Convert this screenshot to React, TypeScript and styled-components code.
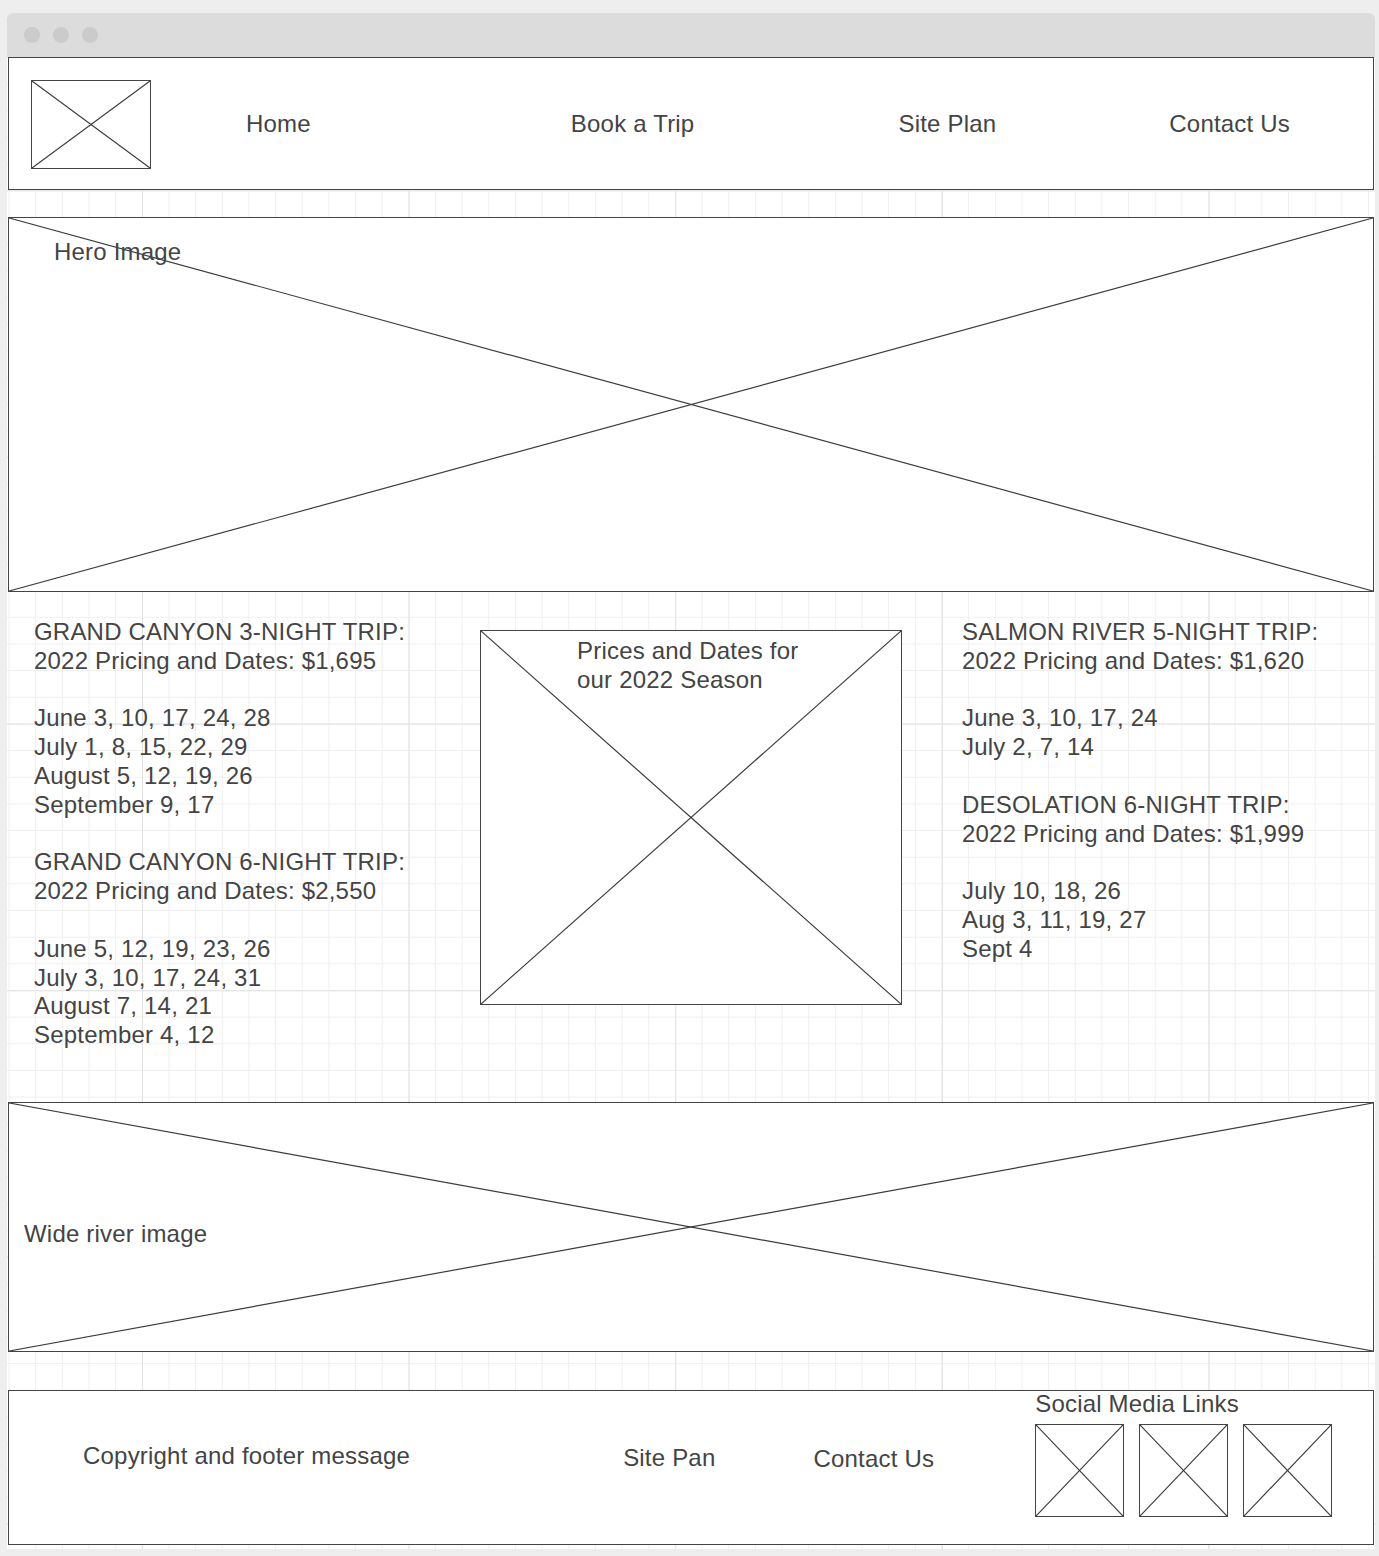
import React from 'react';
import styled, { createGlobalStyle } from 'styled-components';

const GlobalStyle = createGlobalStyle`
  html, body {
    margin: 0;
    padding: 0;
    background: #eeeeee;
  }
  body {
    font-family: 'Liberation Sans', Arial, sans-serif;
    color: #444;
  }
  * {
    box-sizing: border-box;
  }
`;

const ink = '#444';

const Window = styled.div`
  width: 1368px;
  margin: 13px 0 0 7px;
  padding-bottom: 8px;
`;

const TitleBar = styled.div`
  height: 44px;
  background: #dcdcdc;
  border-radius: 6px 6px 0 0;
  display: flex;
  align-items: center;
  gap: 13px;
  padding-left: 17px;
`;

const Dot = styled.span`
  width: 16px;
  height: 16px;
  border-radius: 50%;
  background: #cbcbcb;
`;

const Canvas = styled.div`
  padding: 0 1px 4px;
  background-color: #fff;
  background-image: linear-gradient(to right, #e2e2e2 1px, transparent 1px),
    linear-gradient(to bottom, #e2e2e2 1px, transparent 1px),
    linear-gradient(to right, #efefef 1px, transparent 1px),
    linear-gradient(to bottom, #efefef 1px, transparent 1px);
  background-size: 266.667px 266.667px, 266.667px 266.667px, 26.667px 26.667px,
    26.667px 26.667px;
  background-position: 135px 133.33px, 135px 133.33px, 1.5px 0, 1.5px 0;
`;

const Box = styled.div`
  position: relative;
  background: #fff;
  border: 1px solid ${ink};
`;

const CrossSvg = styled.svg`
  position: absolute;
  inset: 0;
  width: 100%;
  height: 100%;
  stroke: #3c3c3c;
  stroke-width: 1.2;
  pointer-events: none;
`;

const Cross = () => (
  <CrossSvg viewBox="0 0 100 100" preserveAspectRatio="none">
    <line x1="0" y1="0" x2="100" y2="100" vectorEffect="non-scaling-stroke" />
    <line x1="0" y1="100" x2="100" y2="0" vectorEffect="non-scaling-stroke" />
  </CrossSvg>
);

const Text = styled.div`
  position: relative;
  font-size: 24px;
  line-height: 28.8px;
  letter-spacing: 0.2px;
  color: ${ink};
  white-space: nowrap;
`;

const Header = styled(Box)`
  height: 133px;
  display: flex;
  align-items: center;
  padding-left: 22px;
`;

const Logo = styled(Box)`
  width: 120px;
  height: 89px;
  flex: none;
  margin-top: 1px;
`;

const NavLink = styled(Text)<{ $offset: number }>`
  margin-left: ${({ $offset }) => $offset}px;
  padding-top: 1px;
`;

const Spacer = styled.div<{ $h: number }>`
  height: ${({ $h }) => $h}px;
`;

const Hero = styled(Box)`
  height: 375px;
  padding: 20px 0 0 45px;
`;

const Middle = styled.section`
  height: 510px;
  display: grid;
  grid-template-columns: 386px 422px 1fr;
  column-gap: 60px;
  align-items: start;
  padding: 26px 0 0 26px;
`;

const TripColumn = styled.div`
  display: flex;
  flex-direction: column;
`;

const TripBlock = styled(Text)`
  & + & {
    margin-top: 28.8px;
  }
`;

const SeasonBox = styled(Box)`
  height: 375px;
  margin-top: 12px;
  padding: 6px 0 0 96px;
`;

const River = styled(Box)`
  height: 250px;
  display: flex;
  align-items: center;
  padding: 15px 0 0 15px;
`;

const Footer = styled(Box)`
  height: 155px;
  display: flex;
  align-items: flex-start;
  padding-left: 74px;
`;

const FooterText = styled(Text)<{ $offset: number; $top: number }>`
  margin-left: ${({ $offset }) => $offset}px;
  margin-top: ${({ $top }) => $top}px;
`;

const Social = styled.div`
  margin-left: 101px;
  margin-top: -1px;
  display: flex;
  flex-direction: column;
  gap: 5px;
`;

const SocialRow = styled.div`
  display: flex;
  gap: 15px;
`;

const SocialIcon = styled(Box)`
  width: 89px;
  height: 93px;
`;

const trips = {
  left: [
    [
      'GRAND CANYON 3-NIGHT TRIP:',
      '2022 Pricing and Dates: $1,695',
      '',
      'June 3, 10, 17, 24, 28',
      'July 1, 8, 15, 22, 29',
      'August 5, 12, 19, 26',
      'September 9, 17',
    ],
    [
      'GRAND CANYON 6-NIGHT TRIP:',
      '2022 Pricing and Dates: $2,550',
      '',
      'June 5, 12, 19, 23, 26',
      'July 3, 10, 17, 24, 31',
      'August 7, 14, 21',
      'September 4, 12',
    ],
  ],
  right: [
    [
      'SALMON RIVER 5-NIGHT TRIP:',
      '2022 Pricing and Dates: $1,620',
      '',
      'June 3, 10, 17, 24',
      'July 2, 7, 14',
    ],
    [
      'DESOLATION 6-NIGHT TRIP:',
      '2022 Pricing and Dates: $1,999',
      '',
      'July 10, 18, 26',
      'Aug 3, 11, 19, 27',
      'Sept 4',
    ],
  ],
};

const Trip = ({ lines }: { lines: string[] }) => (
  <TripBlock>
    {lines.map((line, i) => (
      <div key={i}>{line || '\u00a0'}</div>
    ))}
  </TripBlock>
);

export default function App() {
  return (
    <>
      <GlobalStyle />
      <Window>
        <TitleBar>
          <Dot />
          <Dot />
          <Dot />
        </TitleBar>
        <Canvas>
          <Header>
            <Logo>
              <Cross />
            </Logo>
            <NavLink $offset={95}>Home</NavLink>
            <NavLink $offset={260}>Book a Trip</NavLink>
            <NavLink $offset={204}>Site Plan</NavLink>
            <NavLink $offset={173}>Contact Us</NavLink>
          </Header>
          <Spacer $h={27} />
          <Hero>
            <Cross />
            <Text>Hero Image</Text>
          </Hero>
          <Middle>
            <TripColumn>
              {trips.left.map((t, i) => (
                <Trip key={i} lines={t} />
              ))}
            </TripColumn>
            <SeasonBox>
              <Cross />
              <Text>
                Prices and Dates for
                <br />
                our 2022 Season
              </Text>
            </SeasonBox>
            <TripColumn>
              {trips.right.map((t, i) => (
                <Trip key={i} lines={t} />
              ))}
            </TripColumn>
          </Middle>
          <River>
            <Cross />
            <Text>Wide river image</Text>
          </River>
          <Spacer $h={38} />
          <Footer>
            <FooterText $offset={0} $top={51}>
              Copyright and footer message
            </FooterText>
            <FooterText $offset={213} $top={53}>
              Site Pan
            </FooterText>
            <FooterText $offset={98} $top={54}>
              Contact Us
            </FooterText>
            <Social>
              <Text>Social Media Links</Text>
              <SocialRow>
                {[0, 1, 2].map(i => (
                  <SocialIcon key={i}>
                    <Cross />
                  </SocialIcon>
                ))}
              </SocialRow>
            </Social>
          </Footer>
        </Canvas>
      </Window>
    </>
  );
}
